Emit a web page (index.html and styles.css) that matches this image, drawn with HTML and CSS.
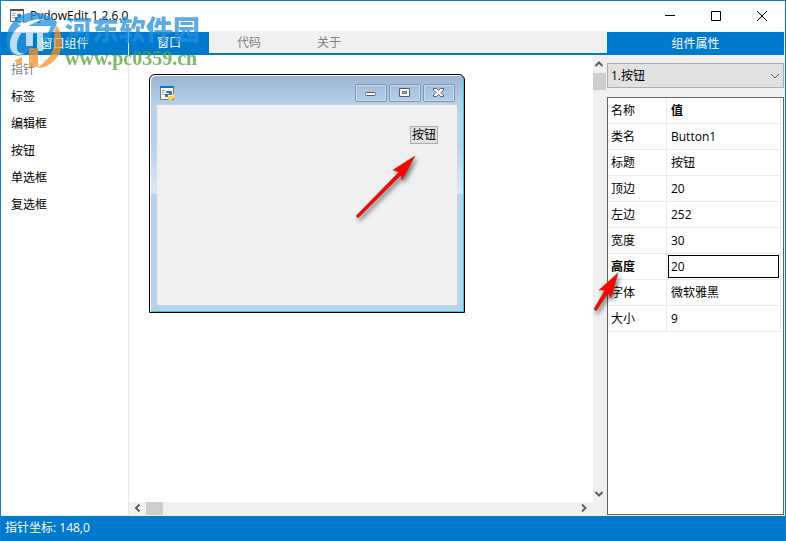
FILE: index.html
```html
<!DOCTYPE html>
<html lang="zh-CN">
<head>
<meta charset="utf-8">
<title>PydowEdit 1.2.6.0</title>
<link rel="stylesheet" href="styles.css">
</head>
<body>
<div class="app">
  <header class="titlebar">
    <svg class="app-icon" width="16" height="16" viewBox="0 0 16 16" aria-hidden="true"><path d="M1.500 1.500h13v12h-13z" fill="#f8f8f8" stroke="#666"/><path d="M1 1h14v2H1z" fill="#555"/><path d="M3 5.500h4M3 7.500h3M3 9.500h4" stroke="#aaa"/><path d="M8 6h4v4H9v3H6V9h3z" fill="#3672a8"/></svg>
    <h1 class="app-title">PydowEdit 1.2.6.0</h1>
    <button class="win-btn" aria-label="最小化"><svg width="12" height="12" viewBox="0 0 12 12"><path d="M1 5.500h10" stroke="#000"/></svg></button>
    <button class="win-btn" aria-label="最大化"><svg width="12" height="12" viewBox="0 0 12 12"><path d="M1.500 1.500h9v9h-9z" fill="none" stroke="#000"/></svg></button>
    <button class="win-btn" aria-label="关闭"><svg width="12" height="12" viewBox="0 0 12 12"><path d="M1 1l10 10M11 1L1 11" stroke="#000"/></svg></button>
  </header>

  <main class="workspace">
    <aside class="palette">
      <h2 class="panel-head">窗口组件</h2>
      <div class="palette-list">
        <button class="palette-item muted">指针</button>
        <button class="palette-item">标签</button>
        <button class="palette-item">编辑框</button>
        <button class="palette-item">按钮</button>
        <button class="palette-item">单选框</button>
        <button class="palette-item">复选框</button>
      </div>
    </aside>

    <section class="editor">
      <nav class="tabs">
        <button class="tab active">窗口</button>
        <button class="tab">代码</button>
        <button class="tab">关于</button>
      </nav>
      <div class="canvas">
        <div class="form">
          <div class="form-bar">
            <svg class="form-icon" width="16" height="16" viewBox="0 0 16 16" aria-hidden="true">
              <path d="M.5 1h13v12.500H.5z" fill="#f8f8f8" stroke="#777"/>
              <path d="M0 0h14v2H0z" fill="#0078d7"/>
              <path d="M2 4.500h3M2 6.500h2M2 8.500h3" stroke="#aaa"/>
              <path d="M7 5h4q1 0 1 1v2q0 1-1 1H8v2H6q-1 0-1-1V8h4V7H6V6z" fill="#3672a8"/>
              <path d="M12.500 8H14q1 0 1 1v2q0 1-1 1h-2v1q0 1-1 1H9q-1 0-1-1v-2q0-1 1-1h3z" fill="#fcd845"/>
            </svg>
            <div class="form-buttons">
              <button class="form-btn" aria-label="最小化"><svg width="14" height="12" viewBox="0 0 14 12"><rect x="1.500" y="5.500" width="10" height="3" rx="1" fill="#fff" stroke="#555a70"/></svg></button>
              <button class="form-btn" aria-label="最大化"><svg width="14" height="12" viewBox="0 0 14 12"><path d="M1.500 1.500h10v8h-10zM4.500 4.500v2h4v-2z" fill="#fff" fill-rule="evenodd" stroke="#555a70"/></svg></button>
              <button class="form-btn" aria-label="关闭"><svg width="14" height="12" viewBox="0 0 14 12"><path d="M1.500 1.500h3l2 2 2-2h3v1.500l-2.500 2.500 2.500 2.500v1.500h-3l-2-2-2 2h-3V8L4 5.500 1.500 3z" fill="#fff" stroke="#555a70"/></svg></button>
            </div>
          </div>
          <div class="form-body">
            <button class="placed-button">按钮</button>
          </div>
        </div>
      </div>
      <div class="scroll-v">
        <svg width="12" height="18" viewBox="0 0 12 18"><path d="M2.500 11L6 7.500 9.500 11" fill="none" stroke="#606060" stroke-width="2"/></svg>
        <span class="thumb"></span>
        <svg class="scroll-end" width="12" height="18" viewBox="0 0 12 18"><path d="M2.500 8L6 11.500 9.500 8" fill="none" stroke="#606060" stroke-width="2"/></svg>
      </div>
      <div class="scroll-h">
        <svg width="17" height="12" viewBox="0 0 17 12"><path d="M10.500 2.500L7 6l3.500 3.500" fill="none" stroke="#606060" stroke-width="2"/></svg>
        <span class="thumb"></span>
        <svg class="scroll-end" width="17" height="12" viewBox="0 0 17 12"><path d="M6 2.500L9.500 6 6 9.500" fill="none" stroke="#606060" stroke-width="2"/></svg>
      </div>
    </section>

    <aside class="inspector">
      <h2 class="panel-head">组件属性</h2>
      <div class="picker">
        <select class="picker-select" aria-label="组件"><option>1.按钮</option></select>
        <svg class="picker-arrow" width="10" height="6" viewBox="0 0 10 6" aria-hidden="true"><path d="M1 1l4 4 4-4" fill="none" stroke="#555"/></svg>
      </div>
      <div class="property-box">
        <table class="properties">
          <tbody>
            <tr><th scope="col">名称</th><td class="strong">值</td></tr>
            <tr><th scope="row">类名</th><td>Button1</td></tr>
            <tr><th scope="row">标题</th><td>按钮</td></tr>
            <tr><th scope="row">顶边</th><td>20</td></tr>
            <tr><th scope="row">左边</th><td>252</td></tr>
            <tr><th scope="row">宽度</th><td>30</td></tr>
            <tr><th scope="row" class="strong"><label for="height">高度</label></th><td class="editing"><input id="height" class="value-input" value="20"></td></tr>
            <tr><th scope="row">字体</th><td>微软雅黑</td></tr>
            <tr><th scope="row">大小</th><td>9</td></tr>
          </tbody>
        </table>
        <svg class="arrow-small" width="40" height="50" viewBox="0 0 40 50" aria-hidden="true"><path d="M26 5l-19 17 6 0L2 41l2 2 12-18 3 5z" fill="#f00" stroke="#9a3a30" stroke-width=".6"/></svg>
      </div>
    </aside>
  </main>

  <footer class="statusbar">指针坐标: 148,0</footer>

  <svg class="arrow-large" width="76" height="76" viewBox="0 0 76 76" aria-hidden="true"><path d="M65 5L43 19l6 2L6 65l2 2 43-43 1 5z" fill="#f00" stroke="#9a3a30" stroke-width=".6"/></svg>

  <div class="watermark">
    <svg width="58" height="60" viewBox="0 0 58 60" aria-hidden="true">
      <path d="M52 12C40 1 22-1 11 9 2 17-1 30 3 39 6 45 12 47 18 45L27 38V24h8v10C43 30 50 22 52 12z" fill="#2090dc"/>
      <path d="M5 33C6 21 17 9 40 9 24 13 13 22 12 35 11 42 15 44 20 43 12 48 4 43 5 33z" fill="#fff"/>
      <path d="M14 23l9-7h5v20h-7V23z" fill="#fff"/>
      <path d="M28 16h18l-3 7h-5v18h-6V23h-4z" fill="#fff"/>
      <path d="M51 15C61 28 58 46 45 54 41 57 36 58 32 58 44 50 51 40 49 28 49 23 50 19 51 15z" fill="#f79228"/>
      <path d="M24 38h9v19h-9zM9 51l8-4v9z" fill="#f79228"/>
      <path d="M17 10l1 3 4 1-4 1-1 4-1-4-4-1 4-1z" fill="#fff"/>
    </svg>
    <div class="watermark-text">
      <span class="watermark-name">河东软件园</span>
      <span class="watermark-url">www.pc0359.cn</span>
    </div>
  </div>
</div>
</body>
</html>
```

FILE: styles.css
```css
* { box-sizing: border-box; }

body {
  margin: 0;
  font: 12px/18px "Open Sans", "Noto Sans CJK SC", sans-serif;
  color: #000;
}

button, input, select {
  font: inherit;
  color: inherit;
  margin: 0;
  padding: 0;
  border: 0;
  border-radius: 0;
  background: none;
}

h1, h2 { margin: 0; font: inherit; }
svg { display: block; flex: none; }

.app {
  position: relative;
  display: flex;
  flex-direction: column;
  min-height: 100vh;
  border: 1px solid #0f7dd2;
  border-bottom: 0;
  background: #f0f0f0;
}

.titlebar {
  display: flex;
  align-items: center;
  height: 30px;
  padding-left: 8px;
  background: #fff;
}
.app-title { flex: 1; margin-left: 5px; }
.win-btn { display: grid; place-items: center; width: 46px; height: 29px; }

.workspace {
  flex: 1;
  display: grid;
  grid-template-columns: 128px minmax(0, 1fr) 178px;
}

.panel-head {
  height: 23px;
  line-height: 23px;
  text-align: center;
  color: #fff;
  background: #007acc;
}

.palette {
  display: flex;
  flex-direction: column;
  padding: 1px 0;
  border-right: 1px solid #e8e8e8;
}
.palette-list { flex: 1; display: flex; flex-direction: column; padding-top: 1px; background: #fff; }
.palette-item { height: 27px; padding-left: 10px; text-align: left; }
.muted { color: #808080; }

.editor {
  display: grid;
  grid-template: 24px minmax(0, 1fr) 13px / minmax(0, 1fr) 14px;
  padding-bottom: 1px;
}
.tabs {
  grid-column: 1 / 3;
  display: flex;
  padding-top: 1px;
  border-bottom: 2px solid #007acc;
}
.tab { width: 80px; color: #808080; }
.tab.active { color: #fff; background: #007acc; }
.canvas { padding: 19px 20px; background: #fff; }

.form {
  width: 316px;
  padding: 1px 7px 7px;
  border: 1px solid #000;
  border-radius: 6px 6px 0 0;
  box-shadow: inset 1px 1px #fff, inset -1px -1px #34c6d8;
  background: linear-gradient(#99b4d1, #b9d1ea 30px, #b9d1ea 70px, #dce8f5 118px, #b9d1ea 120px);
}
.form-bar { display: flex; align-items: flex-start; justify-content: space-between; height: 29px; padding: 8px 2px 0 3px; }
.form-icon { margin-top: 2px; }
.form-buttons { display: flex; gap: 2px; }
.form-btn {
  display: grid;
  place-items: center;
  width: 32px;
  height: 18px;
  border: 1px solid #8393ad;
  border-radius: 2px;
  box-shadow: inset 0 0 0 1px #c9dbee;
}
.form-body { display: flex; justify-content: flex-end; align-items: flex-start; height: 200px; padding: 21px 19px; background: #f0f0f0; }
.placed-button { width: 28px; height: 18px; line-height: 16px; border: 1px solid #adadad; background: #e1e1e1; }

.scroll-v { display: flex; flex-direction: column; padding-right: 1px; }
.scroll-h { display: flex; }
.thumb { background: #cdcdcd; }
.scroll-v .thumb { height: 17px; }
.scroll-h .thumb { width: 17px; }
.scroll-v .scroll-end { margin-top: auto; }
.scroll-h .scroll-end { margin-left: auto; }

.inspector { display: flex; flex-direction: column; padding: 1px 1px 1px 0; }
.picker { position: relative; margin: 8px 0 9px; }
.picker-select {
  display: block;
  appearance: none;
  width: 100%;
  height: 25px;
  padding-left: 3px;
  border: 1px solid #adadad;
  background: #e1e1e1;
}
.picker-arrow { position: absolute; right: 4px; top: 10px; }

.property-box {
  position: relative;
  flex: 1;
  padding-right: 2px;
  border: 1px solid #646464;
  background: #fff;
}
.properties { width: 100%; border-collapse: separate; border-spacing: 0; table-layout: fixed; }
.properties th, .properties td {
  height: 26px;
  padding: 0 0 0 3px;
  border-right: 1px solid #ebebeb;
  border-bottom: 1px solid #ebebeb;
  font-weight: 400;
  text-align: left;
}
.properties th { width: 59px; }
.properties td { padding-left: 4px; }
.properties .strong { font-weight: 700; }
.properties .editing { padding: 0 1px; }
.value-input { display: block; width: 100%; height: 23px; padding-left: 2px; border: 1px solid #000; background: #fff; }

.statusbar { height: 25px; padding-left: 4px; line-height: 23px; color: #fff; background: #007acc; }

.arrow-large, .arrow-small { position: absolute; pointer-events: none; filter: drop-shadow(2px 3px 2px rgb(0 0 0 / 50%)); }
.arrow-large { left: 349px; top: 150px; }
.arrow-small { left: -16px; top: 170px; }

.watermark {
  position: absolute;
  left: 4px;
  top: 9px;
  display: flex;
  gap: 2px;
  opacity: .75;
  pointer-events: none;
}
.watermark-text { display: flex; flex-direction: column; }
.watermark-name { font: 900 27px/37px "Noto Sans CJK SC", sans-serif; color: #2690dc; }
.watermark-url { font: 700 20px/22px "Liberation Serif", serif; color: #48a832; }
```
